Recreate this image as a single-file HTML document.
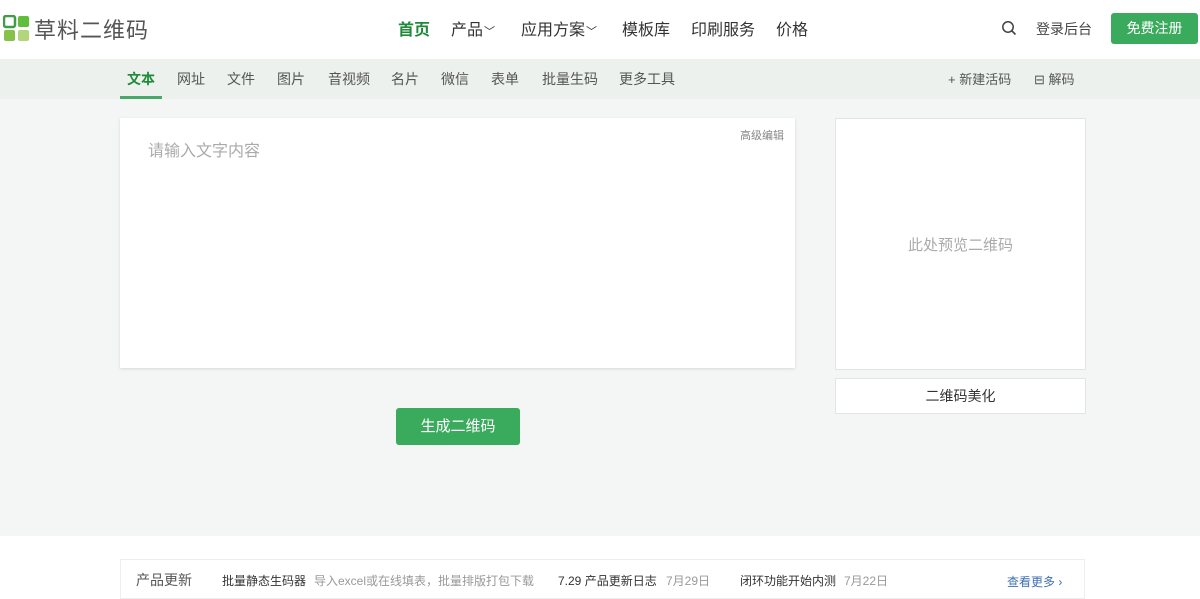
<!DOCTYPE html>
<html><head><meta charset="utf-8"><style>
*{margin:0;padding:0;box-sizing:border-box}
body{width:1200px;height:595px;overflow:hidden;background:#fff;font-family:"Liberation Sans","Noto Sans CJK SC",sans-serif;color:#333;position:relative}
.abs{position:absolute}
.hdr{top:0;left:0;width:1200px;height:59px;background:#fff}
.nav a{position:absolute;top:16px;font-size:16px;color:#333;white-space:nowrap}
.nav small{font-size:11px;margin-left:1px}
.sub{top:59px;left:0;width:1200px;height:40px;background:#edf1ee}
.sub span{position:absolute;top:10px;font-size:14px;color:#555}
.main{top:99px;left:0;width:1200px;height:437px;background:#f4f6f5}
.box{background:#fff;box-shadow:0 1px 3px rgba(0,0,0,.12)}
</style></head><body>
<div class="abs hdr">
  <svg class="abs" style="left:3px;top:15px" width="28" height="27" viewBox="0 0 28 27">
    <rect x="1" y="1" width="11" height="11" rx="2" fill="none" stroke="#3f9d45" stroke-width="2.5"/>
    <rect x="15" y="1" width="11" height="11" rx="2" fill="#5fbe3c"/>
    <rect x="1" y="15" width="11" height="11" rx="2" fill="#86c24b"/>
    <rect x="15" y="15" width="11" height="11" rx="2" fill="#b3d67a"/>
  </svg>
  <div class="abs" style="left:34px;top:13px;font-size:22px;color:#555;letter-spacing:1px">草料二维码</div>
  <div class="nav">
    <a style="left:398px;color:#1f8b3a;font-weight:bold">首页</a>
    <a style="left:451px">产品<small>﹀</small></a>
    <a style="left:521px">应用方案<small>﹀</small></a>
    <a style="left:622px">模板库</a>
    <a style="left:691px">印刷服务</a>
    <a style="left:776px">价格</a>
  </div>
  <svg class="abs" style="left:1001px;top:20px" width="16" height="16" viewBox="0 0 16 16"><circle cx="7" cy="7" r="5.2" fill="none" stroke="#444" stroke-width="1.5"/><path d="M11 11l3.5 3.5" stroke="#444" stroke-width="1.6"/></svg>
  <div class="abs" style="left:1036px;top:19px;font-size:14px;color:#444">登录后台</div>
  <div class="abs" style="left:1111px;top:13px;width:87px;height:31px;background:#3aaa5c;border-radius:3px;color:#fff;font-size:14px;text-align:center;line-height:31px">免费注册</div>
</div>
<div class="abs sub">
  <span style="left:127px;color:#1f8b3a;font-weight:bold">文本</span>
  <div class="abs" style="left:120px;top:37px;width:42px;height:3px;background:#4aa86a"></div>
  <span style="left:177px">网址</span><span style="left:227px">文件</span><span style="left:277px">图片</span>
  <span style="left:328px">音视频</span><span style="left:391px">名片</span><span style="left:441px">微信</span>
  <span style="left:491px">表单</span><span style="left:542px">批量生码</span><span style="left:619px">更多工具</span>
  <span style="left:948px;font-size:13px">+ 新建活码</span>
  <span style="left:1034px;font-size:13px">⊟ 解码</span>
</div>
<div class="abs main"></div>
<div class="abs box" style="left:120px;top:118px;width:675px;height:250px">
  <div class="abs" style="left:28px;top:19px;font-size:16px;color:#aaa">请输入文字内容</div>
  <div class="abs" style="right:11px;top:9px;font-size:11px;color:#888">高级编辑</div>
</div>
<div class="abs" style="left:396px;top:408px;width:124px;height:37px;background:#3aaa5c;border-radius:3px;color:#fff;font-size:15px;text-align:center;line-height:37px">生成二维码</div>
<div class="abs" style="left:835px;top:118px;width:251px;height:252px;background:#fff;border:1px solid #e2e5e3">
  <div class="abs" style="left:0;width:249px;top:115px;text-align:center;font-size:15px;color:#aaa">此处预览二维码</div>
</div>
<div class="abs" style="left:835px;top:378px;width:251px;height:36px;background:#fff;border:1px solid #e2e5e3;text-align:center;line-height:34px;font-size:14px;color:#333">二维码美化</div>
<div class="abs" style="left:120px;top:559px;width:965px;height:40px;border:1px solid #eee;background:#fff;font-size:12px;white-space:nowrap">
  <span class="abs" style="left:15px;top:10px;font-size:14px;color:#555">产品更新</span>
  <span class="abs" style="left:101px;top:12px;color:#333">批量静态生码器</span>
  <span class="abs" style="left:193px;top:12px;color:#999">导入excel或在线填表，批量排版打包下载</span>
  <span class="abs" style="left:437px;top:12px;color:#333">7.29 产品更新日志</span>
  <span class="abs" style="left:545px;top:12px;color:#999">7月29日</span>
  <span class="abs" style="left:619px;top:12px;color:#333">闭环功能开始内测</span>
  <span class="abs" style="left:723px;top:12px;color:#999">7月22日</span>
  <span class="abs" style="left:886px;top:13px;color:#3f6fb5">查看更多 ›</span>
</div>
</body></html>
